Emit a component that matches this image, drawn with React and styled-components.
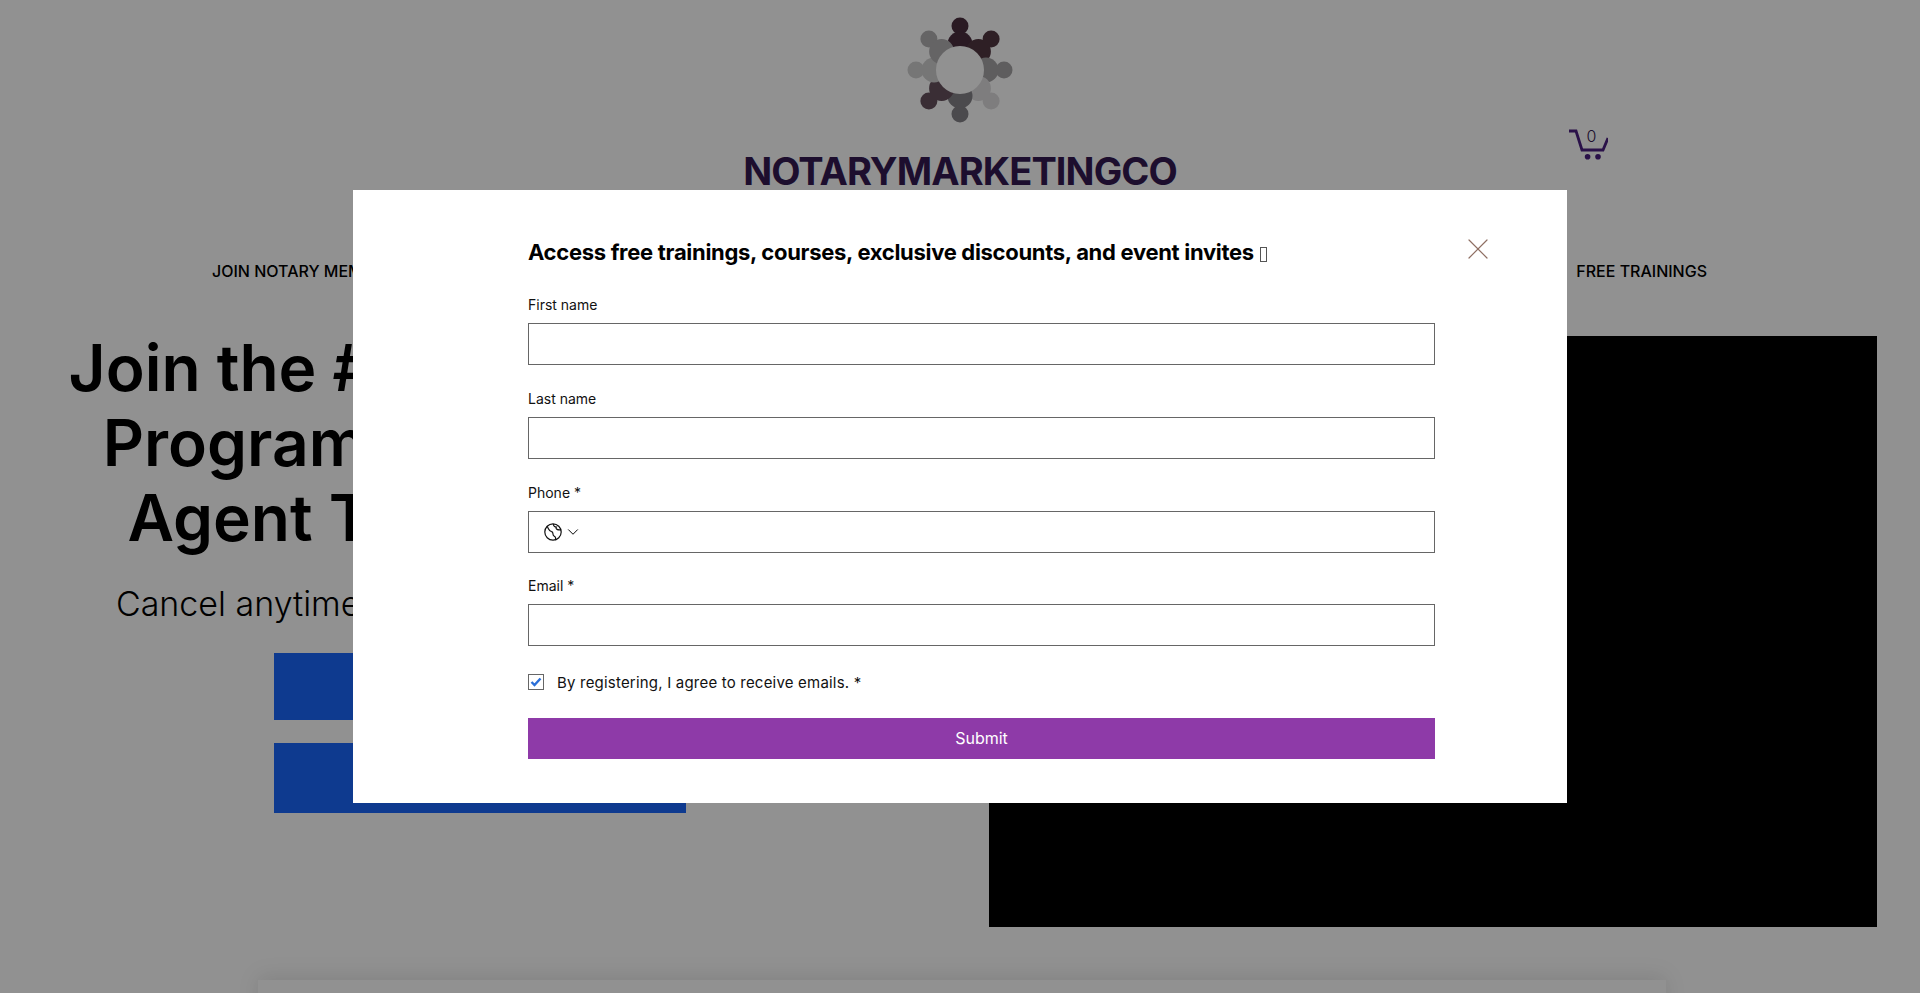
import React from "react";
import styled, { createGlobalStyle } from "styled-components";
import { ChevronDown, X } from "lucide-react";

const GlobalStyle = createGlobalStyle`
  html, body {
    margin: 0;
    padding: 0;
    height: 993px;
    overflow: hidden;
    background: #fff;
    font-family: Inter, "Noto Sans", sans-serif;
    color: #000;
  }
  * { box-sizing: border-box; }
`;

// Page behind the popup
const Page = styled.div`
  height: 993px;
  overflow: hidden;
`;

const Header = styled.header`
  display: grid;
  grid-template-columns: 1fr 433px 1fr;
  padding-top: 15px;
`;

const Brand = styled.div`
  grid-column: 2;
  display: flex;
  flex-direction: column;
  align-items: center;
`;

const BrandName = styled.div`
  margin-top: 23px;
  font-size: 38px;
  line-height: 46px;
  font-weight: 700;
  letter-spacing: -0.9px;
  color: #341a52;
  white-space: nowrap;
`;

const CartSlot = styled.div`
  padding: 114px 0 0 392px;
`;

const Cart = styled.div`
  position: relative;
  width: 39px;
  height: 31px;
`;

const CartCount = styled.span`
  position: absolute;
  left: 17px;
  top: -2px;
  width: 12px;
  text-align: center;
  font-size: 16px;
  line-height: 18px;
  font-weight: 300;
  color: #341a52;
`;

const Nav = styled.nav`
  display: flex;
  justify-content: space-between;
  margin-top: 67px;
  padding: 0 213px 0 212px;
  font-size: 16px;
  line-height: 20px;
  font-weight: 500;
`;

const Hero = styled.section`
  display: grid;
  grid-template-columns: 960px 917px;
  margin-top: 49px;
`;

const HeroText = styled.div`
  display: flex;
  flex-direction: column;
  align-items: center;
  text-align: center;
`;

const Headline = styled.h1`
  margin: 0;
  font-size: 64px;
  line-height: 75px;
  font-weight: 600;
  white-space: nowrap;
`;

const HeadLine = styled.span`
  display: block;
  padding-left: ${(p) => p.$left || 0}px;
  padding-right: ${(p) => p.$right || 0}px;
`;

const Tagline = styled.p`
  margin: 29px 0 0;
  font-size: 34px;
  line-height: 40px;
  font-weight: 300;
  white-space: nowrap;
`;

const HeroButton = styled.div`
  width: 412px;
  height: ${(p) => p.$h}px;
  margin-top: ${(p) => p.$top}px;
  background: #1a66fb;
`;

const Video = styled.div`
  margin: 6px 0 0 29px;
  height: 591px;
  background: #000;
`;

const NextCard = styled.div`
  margin: 53px 0 0 258px;
  width: 1408px;
  height: 200px;
  background: #fff;
  box-shadow: 0 -4px 20px rgba(0, 0, 0, 0.1);
`;

// Popup
const Overlay = styled.div`
  position: fixed;
  inset: 0;
  display: flex;
  align-items: center;
  justify-content: center;
  background: rgba(0, 0, 0, 0.43);
`;

const Modal = styled.div`
  position: relative;
  width: 1214px;
  height: 613px;
  padding: 47px 132px 0 175px;
  background: #fff;
`;

const CloseButton = styled.button`
  position: absolute;
  top: 41px;
  right: 71px;
  width: 36px;
  height: 36px;
  padding: 0;
  border: 0;
  background: none;
  display: flex;
  align-items: center;
  justify-content: center;
  color: #8f6f63;
`;

const Title = styled.h2`
  margin: 0 0 29px;
  font-size: 22px;
  line-height: 30px;
  font-weight: 700;
  letter-spacing: -0.3px;
  white-space: nowrap;
`;

// the emoji after the title has no glyph in the reference, so it shows as an empty box
const MissingGlyph = styled.span`
  display: inline-block;
  width: 7px;
  height: 15px;
  margin-left: 6px;
  border: 1px solid #555;
  vertical-align: -2px;
`;

const Form = styled.form`
  display: flex;
  flex-direction: column;
  gap: 24.8px;
`;

const Field = styled.div`
  display: flex;
  flex-direction: column;
  gap: 9px;
`;

const Label = styled.label`
  font-size: 14px;
  line-height: 18px;
  color: #111;
`;

const Input = styled.input`
  width: 100%;
  height: 42px;
  border: 1px solid #666;
  border-radius: 0;
  background: #fff;
  outline: none;
`;

const PhoneBox = styled.div`
  display: flex;
  align-items: center;
  gap: 2px;
  height: 42px;
  padding-left: 15px;
  border: 1px solid #666;
`;

const Consent = styled.label`
  display: flex;
  align-items: center;
  gap: 13px;
  height: 16px;
  margin-top: 3px;
  font-size: 15px;
  line-height: 16px;
  letter-spacing: 0.2px;
  color: #111;
`;

const ConsentText = styled.span`
  padding-top: 2px;
`;

const CheckBox = styled.span`
  width: 16px;
  height: 16px;
  border: 1px solid #666;
  display: flex;
  align-items: center;
  justify-content: center;
`;

const Submit = styled.button`
  height: 41px;
  margin-top: 3px;
  border: 0;
  background: #8e3aa8;
  color: #fff;
  font-family: inherit;
  font-size: 16px;
`;

const peopleColors = [
  "#4a2e3f",
  "#523842",
  "#a6a4a6",
  "#dedcde",
  "#858288",
  "#66525e",
  "#d0d0d0",
  "#b2b0b2",
];

function Logo() {
  return (
    <svg width="110" height="110" viewBox="-55 -55 110 110">
      {peopleColors.map((color, i) => (
        <g key={i} transform={`rotate(${i * 45})`} fill={color}>
          <circle cx="0" cy="-44" r="8.5" />
          <circle cx="0" cy="-26" r="12.5" />
        </g>
      ))}
      <circle r="24" fill="#fff" />
    </svg>
  );
}

function CartIcon() {
  return (
    <svg width="39" height="31" viewBox="0 0 39 31">
      <path
        d="M0 2 H7 L13 21 H34 L39 9"
        fill="none"
        stroke="#4a1f80"
        strokeWidth="2.8"
      />
      <circle cx="18.6" cy="27.8" r="2.8" fill="#4a1f80" />
      <circle cx="29" cy="27.8" r="2.8" fill="#4a1f80" />
    </svg>
  );
}

function GlobeIcon() {
  return (
    <svg width="18" height="18" viewBox="0 0 18 18" fill="none" stroke="#111" strokeWidth="1.2">
      <circle cx="9" cy="9" r="8.2" />
      <path d="M3 3.2 C5 6 4.6 8 7.6 8.6 C10 9 8 12 10 13 C12 14 12 16 11 17" />
      <path d="M9.5 1 C9 3 11 4 12.4 4 C11 6 14 7.4 17 6.6" />
    </svg>
  );
}

export default function App() {
  return (
    <>
      <GlobalStyle />
      <Page>
        <Header>
          <Brand>
            <Logo />
            <BrandName>NOTARYMARKETINGCO</BrandName>
          </Brand>
          <CartSlot>
            <Cart>
              <CartIcon />
              <CartCount>0</CartCount>
            </Cart>
          </CartSlot>
        </Header>
        <Nav>
          <span>JOIN NOTARY MEMBERSHIP</span>
          <span>FREE TRAININGS</span>
        </Nav>
        <Hero>
          <HeroText>
            <Headline>
              <HeadLine $left={5}>Join the #1 Notary Training</HeadLine>
              <HeadLine $right={15}>Program &amp; Loan Signing</HeadLine>
              <HeadLine $right={12}>Agent Training Course</HeadLine>
            </Headline>
            <Tagline>Cancel anytime and keep your training access</Tagline>
            <HeroButton $h={67} $top={29} />
            <HeroButton $h={70} $top={23} />
          </HeroText>
          <Video />
        </Hero>
        <NextCard />
      </Page>

      <Overlay>
        <Modal>
          <CloseButton aria-label="Close">
            <X size={36} strokeWidth={0.8} />
          </CloseButton>
          <Title>
            Access free trainings, courses, exclusive discounts, and event invites
            <MissingGlyph />
          </Title>
          <Form>
            <Field>
              <Label>First name</Label>
              <Input />
            </Field>
            <Field>
              <Label>Last name</Label>
              <Input />
            </Field>
            <Field>
              <Label>Phone *</Label>
              <PhoneBox>
                <GlobeIcon />
                <ChevronDown size={18} strokeWidth={1.3} />
              </PhoneBox>
            </Field>
            <Field>
              <Label>Email *</Label>
              <Input />
            </Field>
            <Consent>
              <CheckBox>
                <svg width="12" height="10" viewBox="0 0 12 10">
                  <path d="M1.5 5 L4.5 8 L10.5 1.5" fill="none" stroke="#2b6fd8" strokeWidth="2.4" />
                </svg>
              </CheckBox>
              <ConsentText>By registering, I agree to receive emails. *</ConsentText>
            </Consent>
            <Submit type="button">Submit</Submit>
          </Form>
        </Modal>
      </Overlay>
    </>
  );
}
